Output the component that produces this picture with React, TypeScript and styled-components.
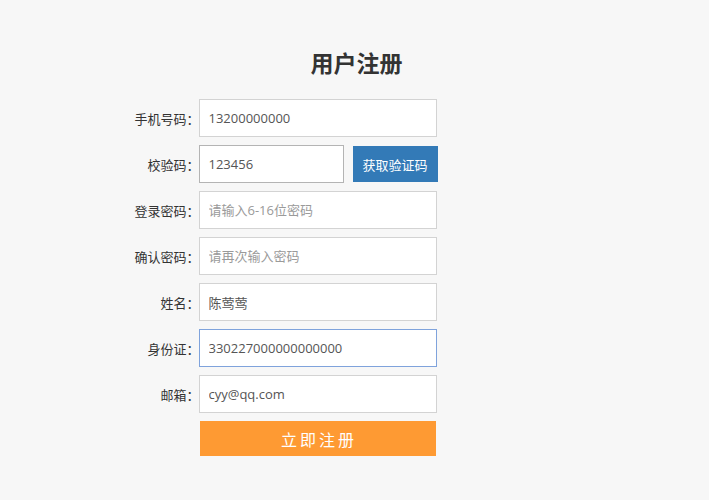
import React, { useState } from "react";
import styled, { createGlobalStyle } from "styled-components";

const GlobalStyle = createGlobalStyle`
  html, body {
    margin: 0;
    padding: 0;
    background-color: #f7f7f7;
    font-family: "Open Sans", "Noto Sans CJK SC", sans-serif;
    color: #333;
  }
`;

const Page = styled.div`
  width: 100%;
  min-height: 500px;
  background-color: #f7f7f7;
  overflow: hidden;
`;

const Title = styled.h1`
  margin: 47px 0 22px;
  font-size: 23px;
  line-height: 30px;
  font-weight: bold;
  text-align: center;
  color: #333;
  font-family: "Noto Sans CJK SC", sans-serif;
  padding-left: 4px;
`;

const Form = styled.form`
  width: 460px;
  margin: 0 auto;
  display: flex;
  flex-direction: column;
  gap: 8px;
`;

const Row = styled.div`
  display: flex;
  align-items: center;
  height: 38px;
`;

const Label = styled.label`
  width: 75px;
  flex-shrink: 0;
  text-align: right;
  font-size: 13px;
  color: #333;
  font-family: "Noto Sans CJK SC", sans-serif;
  margin-right: -1px;
`;

const Input = styled.input<{ $width?: number; $focused?: boolean; $dark?: boolean }>`
  box-sizing: border-box;
  width: ${(p) => p.$width ?? 238}px;
  height: 38px;
  padding: 0 9px;
  border: 1px solid
    ${(p) => (p.$focused ? "#7fa3dc" : p.$dark ? "#b4b4b4" : "#d3d3d3")};
  background: #fff;
  font-size: 13px;
  font-family: "Open Sans", "Noto Sans CJK SC", sans-serif;
  color: #555;
  outline: none;
  border-radius: 0;

  &::placeholder {
    color: #9a9a9a;
  }
`;

const CodeButton = styled.button`
  margin-left: 9px;
  width: 85px;
  height: 36px;
  border: none;
  background-color: #337ab7;
  color: #fff;
  font-size: 13px;
  font-family: "Noto Sans CJK SC", sans-serif;
  cursor: pointer;
  padding: 0;
`;

const SubmitRow = styled.div`
  display: flex;
  padding-left: 75px;
`;

const SubmitButton = styled.button`
  width: 236px;
  height: 35px;
  border: none;
  background-color: #fe9a33;
  color: #fff;
  font-size: 16px;
  letter-spacing: 3px;
  font-family: "Noto Sans CJK SC", sans-serif;
  cursor: pointer;
  padding: 0 0 0 3px;
`;

function App() {
  const [form, setForm] = useState({
    phone: "13200000000",
    code: "123456",
    pwd: "",
    pwd2: "",
    name: "陈莺莺",
    idcard: "330227000000000000",
    email: "cyy@qq.com",
  });

  const onChange = (event: React.ChangeEvent<HTMLInputElement>) => {
    const {
      currentTarget: { name, value },
    } = event;
    setForm((current) => ({ ...current, [name]: value }));
  };

  return (
    <Page>
      <GlobalStyle />
      <Title>用户注册</Title>
      <Form onSubmit={(e) => e.preventDefault()}>
        <Row>
          <Label>手机号码：</Label>
          <Input name="phone" value={form.phone} onChange={onChange} />
        </Row>
        <Row>
          <Label>校验码：</Label>
          <Input name="code" $width={145} $dark value={form.code} onChange={onChange} />
          <CodeButton type="button">获取验证码</CodeButton>
        </Row>
        <Row>
          <Label>登录密码：</Label>
          <Input
            name="pwd"
            type="password"
            placeholder="请输入6-16位密码"
            value={form.pwd}
            onChange={onChange}
          />
        </Row>
        <Row>
          <Label>确认密码：</Label>
          <Input
            name="pwd2"
            type="password"
            placeholder="请再次输入密码"
            value={form.pwd2}
            onChange={onChange}
          />
        </Row>
        <Row>
          <Label>姓名：</Label>
          <Input name="name" value={form.name} onChange={onChange} />
        </Row>
        <Row>
          <Label>身份证：</Label>
          <Input name="idcard" $focused value={form.idcard} onChange={onChange} />
        </Row>
        <Row>
          <Label>邮箱：</Label>
          <Input name="email" value={form.email} onChange={onChange} />
        </Row>
        <SubmitRow>
          <SubmitButton type="submit">立即注册</SubmitButton>
        </SubmitRow>
      </Form>
    </Page>
  );
}

export default App;
